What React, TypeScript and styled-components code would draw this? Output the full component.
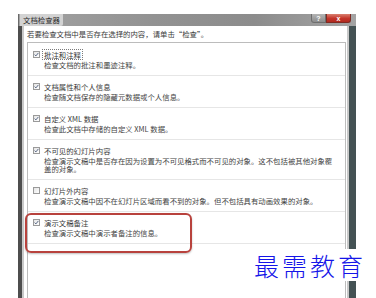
import styled, { createGlobalStyle } from 'styled-components'

const GlobalStyle = createGlobalStyle`
  html, body {
    margin: 0;
    padding: 0;
    background: #ffffff;
  }
  body {
    font-family: "Noto Sans CJK SC", "Noto Sans", sans-serif;
  }
  * {
    box-sizing: border-box;
  }
`

const Page = styled.div`
  position: relative;
  width: 376px;
  height: 298px;
  overflow: hidden;
  padding: 14px 0 0 18px;
  background: #ffffff;
`
const Window = styled.div`
  width: 338px;
  height: 284px;
  display: flex;
  flex-direction: column;
`
const TitleBar = styled.div`
  height: 12px;
  display: flex;
  align-items: flex-start;
  justify-content: space-between;
  background: linear-gradient(90deg, #a2a2a2 0%, #929292 40%, #8c8c8c 70%, #a4a4a4 100%);
  border-left: 1px solid #6a6a6a;
`
const Title = styled.div`
  height: 12px;
  padding: 0 3px;
  margin-left: 1px;
  font-size: 7.4px;
  line-height: 12px;
  color: #2a2a2a;
  background: rgba(232, 232, 232, 0.7);
  border-radius: 0 0 2px 0;
`
const Buttons = styled.div`
  display: flex;
  margin-right: 5px;
`
const CapButton = styled.div<{ $close?: boolean }>`
  width: ${p => (p.$close ? '25px' : '15px')};
  height: 9px;
  display: flex;
  align-items: center;
  justify-content: center;
  font-family: "Liberation Sans", sans-serif;
  font-size: 7px;
  font-weight: 700;
  color: #ffffff;
  background: ${p => (p.$close
    ? 'linear-gradient(180deg, #d98070 0%, #c4352a 55%, #b0291f 100%)'
    : 'linear-gradient(180deg, #b4b4b4 0%, #8c8c8c 100%)')};
  border: 1px solid ${p => (p.$close ? '#7e2a22' : '#6e6e6e')};
  border-top: none;
  border-radius: ${p => (p.$close ? '0 0 3px 0' : '0 0 0 3px')};
`
const Frame = styled.div`
  flex: 1;
  display: flex;
  border-left: 4px solid #4e4e4e;
  border-right: 7px solid #445254;
  background: #c9c9c9;
  padding: 0 2px;
`
const Content = styled.div`
  flex: 1;
  display: flex;
  flex-direction: column;
  background: #ffffff;
`
const Instruction = styled.div`
  padding: 2px 0 0 3px;
  font-size: 7.4px;
  line-height: 12px;
  color: #3a3a3a;
`
const ListBox = styled.div`
  flex: 1;
  margin: 2px 1px 0 3px;
  padding-top: 1px;
  border: 1px solid #bcbcbc;
  border-bottom: none;
`
const Item = styled.div`
  display: grid;
  grid-template-columns: 7px 1fr;
  column-gap: 4px;
  padding: 6px 8px 6px 5px;
  border-bottom: 1px solid #e6e6e6;
`
const Check = styled.div`
  width: 7px;
  height: 7px;
  margin-top: 1px;
  border: 1px solid #9a9a9a;
  background: linear-gradient(135deg, #e4e4e4, #ffffff);
  display: flex;
  align-items: center;
  justify-content: center;
`
const Label = styled.span<{ $focus?: boolean }>`
  justify-self: start;
  font-size: 7.4px;
  line-height: 9px;
  color: #3a3a3a;
  outline: ${p => (p.$focus ? '1px dotted #7a7a7a' : 'none')};
  padding: 0 ${p => (p.$focus ? '1px' : '0')};
  margin-left: ${p => (p.$focus ? '-1px' : '0')};
`
const Desc = styled.div`
  grid-column: 2;
  max-width: 292px;
  margin-top: 2px;
  font-size: 7.4px;
  line-height: 8px;
  color: #444444;
`
const Highlight = styled.div`
  position: absolute;
  left: 25px;
  top: 213px;
  width: 167px;
  height: 40px;
  border: 2px solid #b8423d;
  border-radius: 6px;
  box-shadow: 0 1px 2px rgba(0, 0, 0, 0.25);
`
const Watermark = styled.div`
  position: absolute;
  left: 253px;
  top: 249px;
  padding: 0 1px;
  font-family: "Noto Sans CJK SC", serif;
  font-size: 25px;
  font-weight: 300;
  line-height: 32px;
  letter-spacing: 3px;
  color: #1515e8;
  background: #ffffff;
`

const items = [
  { label: '批注和注释', desc: '检查文档的批注和墨迹注释。', checked: true, focus: true },
  { label: '文档属性和个人信息', desc: '检查随文档保存的隐藏元数据或个人信息。', checked: true },
  { label: '自定义 XML 数据', desc: '检查此文档中存储的自定义 XML 数据。', checked: true },
  {
    label: '不可见的幻灯片内容',
    desc: '检查演示文稿中是否存在因为设置为不可见格式而不可见的对象。这不包括被其他对象覆盖的对象。',
    checked: true
  },
  { label: '幻灯片外内容', desc: '检查演示文稿中因不在幻灯片区域而看不到的对象。但不包括具有动画效果的对象。', checked: false },
  { label: '演示文稿备注', desc: '检查演示文稿中演示者备注的信息。', checked: true }
]

const CheckBox = ({ checked }: { checked: boolean }) => (
  <Check>
    {checked && (
      <svg width="5" height="5" viewBox="0 0 5 5">
        <polyline points="0.6,2.6 1.9,3.9 4.4,0.9" fill="none" stroke="#4a5a7a" strokeWidth="0.9" />
      </svg>
    )}
  </Check>
)

export default function App() {
  return (
    <Page>
      <GlobalStyle />
      <Window>
        <TitleBar>
          <Title>文档检查器</Title>
          <Buttons>
            <CapButton>?</CapButton>
            <CapButton $close>x</CapButton>
          </Buttons>
        </TitleBar>
        <Frame>
          <Content>
            <Instruction>若要检查文档中是否存在选择的内容，请单击“检查”。</Instruction>
            <ListBox>
              {items.map(item => (
                <Item key={item.label}>
                  <CheckBox checked={item.checked} />
                  <Label $focus={item.focus}>{item.label}</Label>
                  <Desc>{item.desc}</Desc>
                </Item>
              ))}
            </ListBox>
          </Content>
        </Frame>
      </Window>
      <Highlight />
      <Watermark>最需教育</Watermark>
    </Page>
  )
}
